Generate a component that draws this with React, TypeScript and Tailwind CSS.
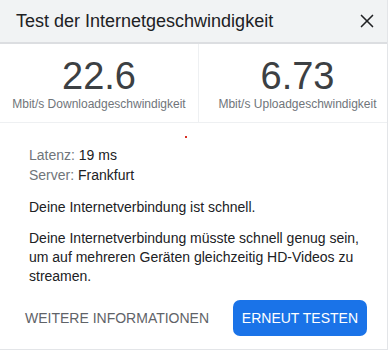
import { X } from 'lucide-react'

export default function App() {
  return (
    <div className="w-[390px] h-[354px] bg-white font-['Liberation_Sans',Arial,sans-serif]">
      <div className="w-[388px] h-[350px] border-r border-b border-[#e3e5e8] flex flex-col">
        <div className="h-[44px] bg-[#f1f3f4] border-b-2 border-[#dcdee1] flex items-center justify-between pl-[16px] pr-[9px] shrink-0">
          <h1 className="text-[18px] text-[#202124] leading-none">Test der Internetgeschwindigkeit</h1>
          <X className="h-[22px] w-[22px] text-[#202124]" strokeWidth={1.8} />
        </div>

        <div className="grid grid-cols-[199px_1fr] h-[79px] border-b border-[#eef0f2] shrink-0">
          <div className="flex flex-col items-center pt-[13px] border-r border-[#eef0f2]">
            <span className="text-[38px] leading-[38px] text-[#3c4043]">22.6</span>
            <span className="text-[12px] leading-[14px] mt-[2px] text-[#70757a]">Mbit/s Downloadgeschwindigkeit</span>
          </div>
          <div className="flex flex-col items-center pt-[13px] pl-[9px]">
            <span className="text-[38px] leading-[38px] text-[#3c4043]">6.73</span>
            <span className="text-[12px] leading-[14px] mt-[2px] text-[#70757a]">Mbit/s Uploadgeschwindigkeit</span>
          </div>
        </div>

        <div className="relative flex-1 pl-[29px] pr-[20px] pt-[22px] text-[14px] text-[#202124]">
          <span className="absolute left-[185px] top-[13px] w-[2px] h-[2px] bg-[#d93025]" />
          <div className="leading-[20px]">
            <p><span className="text-[#70757a]">Latenz:</span> 19 ms</p>
            <p><span className="text-[#70757a]">Server:</span> Frankfurt</p>
          </div>
          <p className="leading-[20px] mt-[12px]">Deine Internetverbindung ist schnell.</p>
          <p className="leading-[19px] mt-[12px] pr-[6px]">
            Deine Internetverbindung müsste schnell genug sein, um auf mehreren Geräten gleichzeitig HD-Videos zu streamen.
          </p>
          <div className="flex items-center justify-between mt-[14px] -ml-[4px] mr-0">
            <button className="text-[14px] text-[#5f6368] uppercase">Weitere Informationen</button>
            <button className="h-[36px] px-[9px] rounded-[7px] bg-[#1a73e8] text-white text-[14px] font-medium uppercase">
              Erneut testen
            </button>
          </div>
        </div>
      </div>
    </div>
  )
}
